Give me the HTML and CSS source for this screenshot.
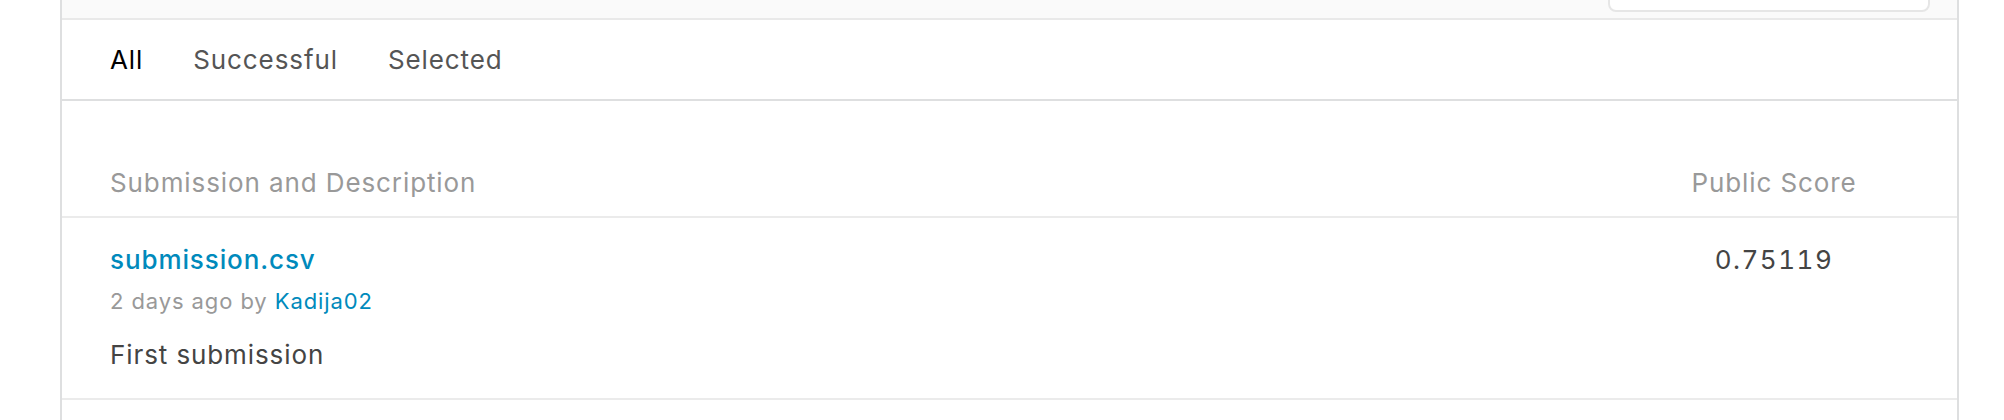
FILE: index.html
```html
<!DOCTYPE html>
<html>
<head>
<meta charset="utf-8">
<link rel="stylesheet" href="styles.css">
</head>
<body>
<div class="card">
  <div class="topband">
    <div class="search"></div>
  </div>
  <div class="tabs">
    <span class="tab active">All</span>
    <span class="tab">Successful</span>
    <span class="tab">Selected</span>
  </div>
  <div class="table">
    <div class="thead">
      <div class="col-main">Submission and Description</div>
      <div class="col-score">Public Score</div>
    </div>
    <div class="row">
      <div class="col-main">
        <a class="file">submission.csv</a>
        <div class="meta">2 days ago by <a class="user">Kadija02</a></div>
        <div class="desc">First submission</div>
      </div>
      <div class="col-score score">0.75119</div>
    </div>
  </div>
</div>
</body>
</html>
```

FILE: styles.css
```css
html, body {
  margin: 0;
  padding: 0;
  background: #ffffff;
  font-family: Inter, "Noto Sans", sans-serif;
  letter-spacing: 0.9px;
}
.card {
  margin-left: 60px;
  width: 1895px;
  border-left: 2px solid #dedfe0;
  border-right: 2px solid #dedfe0;
  height: 420px;
}
.topband {
  height: 18px;
  background: #fafafa;
  border-bottom: 2px solid #e9e9e9;
  display: flex;
  justify-content: flex-end;
  align-items: flex-end;
  overflow: hidden;
  padding-right: 27px;
}
.search {
  width: 318px;
  height: 40px;
  margin-bottom: 6px;
  border: 2px solid #e6e6e6;
  border-radius: 8px;
  background: #ffffff;
  flex: none;
}
.tabs {
  height: 79px;
  border-bottom: 2px solid #dedfe0;
  display: flex;
  align-items: center;
  padding-left: 48px;
  gap: 50px;
}
.tab {
  font-size: 26px;
  color: #555555;
}
.tab.active {
  color: #000000;
}
.thead {
  display: flex;
  align-items: flex-end;
  height: 117px;
  box-sizing: border-box;
  padding-bottom: 18px;
  border-bottom: 2px solid #ebebeb;
  font-size: 26px;
  color: #999999;
}
.col-main {
  flex: 1;
  padding-left: 48px;
}
.col-score {
  width: 200px;
  text-align: center;
  margin-right: 83px;
}
.row {
  display: flex;
  height: 182px;
  box-sizing: border-box;
  padding-top: 26px;
  border-bottom: 2px solid #ebebeb;
}
.file {
  display: block;
  font-size: 26px;
  font-weight: 500;
  color: #008abc;
}
.meta {
  margin-top: 13px;
  font-size: 22px;
  color: #999999;
}
.user {
  color: #008abc;
}
.desc {
  margin-top: 25px;
  font-size: 26px;
  color: #444444;
}
.score {
  font-size: 26px;
  color: #444444;
  font-variant-numeric: tabular-nums;
  letter-spacing: 1.5px;
}
```
